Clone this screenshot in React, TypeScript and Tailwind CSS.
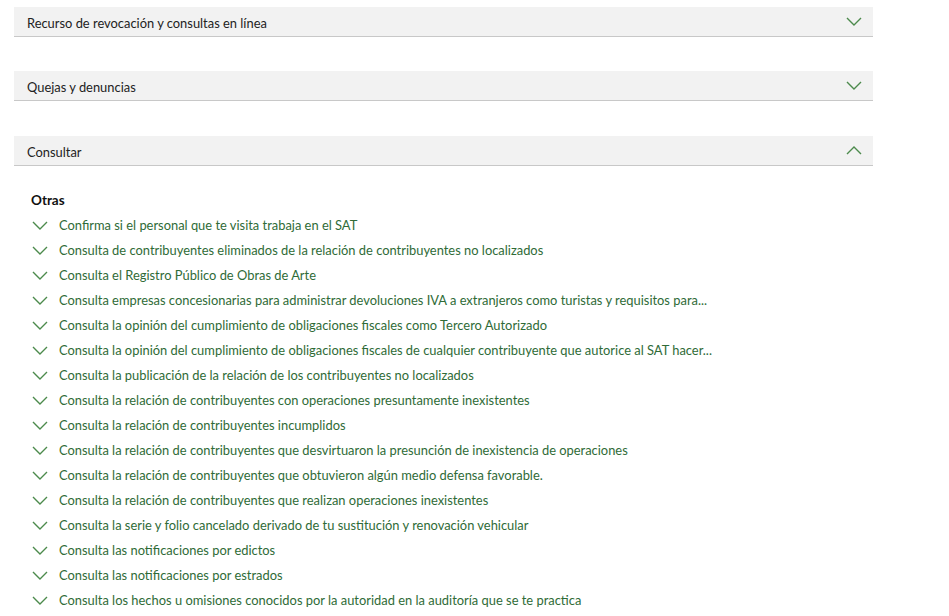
const items = [
  "Confirma si el personal que te visita trabaja en el SAT",
  "Consulta de contribuyentes eliminados de la relación de contribuyentes no localizados",
  "Consulta el Registro Público de Obras de Arte",
  "Consulta empresas concesionarias para administrar devoluciones IVA a extranjeros como turistas y requisitos para...",
  "Consulta la opinión del cumplimiento de obligaciones fiscales como Tercero Autorizado",
  "Consulta la opinión del cumplimiento de obligaciones fiscales de cualquier contribuyente que autorice al SAT hacer...",
  "Consulta la publicación de la relación de los contribuyentes no localizados",
  "Consulta la relación de contribuyentes con operaciones presuntamente inexistentes",
  "Consulta la relación de contribuyentes incumplidos",
  "Consulta la relación de contribuyentes que desvirtuaron la presunción de inexistencia de operaciones",
  "Consulta la relación de contribuyentes que obtuvieron algún medio defensa favorable.",
  "Consulta la relación de contribuyentes que realizan operaciones inexistentes",
  "Consulta la serie y folio cancelado derivado de tu sustitución y renovación vehicular",
  "Consulta las notificaciones por edictos",
  "Consulta las notificaciones por estrados",
  "Consulta los hechos u omisiones conocidos por la autoridad en la auditoría que se te practica",
];

function Chevron({ up, className }: { up?: boolean; className?: string }) {
  return (
    <svg viewBox="0 0 16 9" className={className} fill="none" stroke="currentColor" strokeWidth={1.4}>
      {up ? <polyline points="1,8 8,1 15,8" /> : <polyline points="1,1 8,8 15,1" />}
    </svg>
  );
}

function Header({ title, open }: { title: string; open?: boolean }) {
  return (
    <div className="flex h-[30px] items-center justify-between border-b border-[#c8c8c8] bg-[#f2f2f2] pl-[13px] pr-[11px]">
      <span className="pt-[4px] text-[12.9px] text-[#222]">{title}</span>
      <Chevron up={open} className="h-[9px] w-[16px] text-[#4c8a4c]" />
    </div>
  );
}

export default function App() {
  return (
    <div
      className="min-h-screen bg-white pt-[7px]"
      style={{ fontFamily: "Lato, 'Liberation Sans', sans-serif" }}
    >
      <div className="ml-[14px] w-[859px]">
        <Header title="Recurso de revocación y consultas en línea" />
        <div className="h-[34px]" />
        <Header title="Quejas y denuncias" />
        <div className="h-[35px]" />
        <Header title="Consultar" open />
        <div className="pl-[17px] pt-[22px]">
          <h4 className="text-[13.5px] font-bold leading-[25px] text-[#111]">Otras</h4>
          <ul className="flex flex-col">
            {items.map((t) => (
              <li key={t} className="flex h-[25px] items-center">
                <Chevron className="ml-[1px] h-[9px] w-[16px] text-[#4c8a4c]" />
                <span className="ml-[11px] text-[12.9px] text-[#2f6b37]">{t}</span>
              </li>
            ))}
          </ul>
        </div>
      </div>
    </div>
  );
}
